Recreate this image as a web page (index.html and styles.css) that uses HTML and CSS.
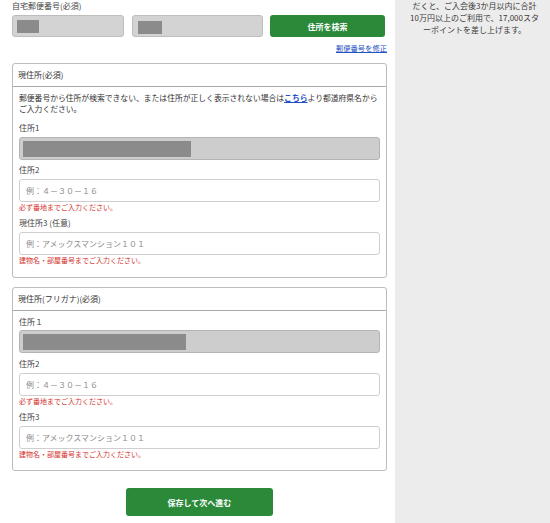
FILE: index.html
```html
<!DOCTYPE html>
<html lang="ja">
<head>
<meta charset="utf-8">
<link rel="stylesheet" href="styles.css">
</head>
<body>
<div class="page">
  <main class="main">
    <div class="top-label">自宅郵便番号(必須)</div>
    <div class="zip-row">
      <div class="zip-input zip-a"><div class="mask mask-a"></div></div>
      <div class="zip-input zip-b"><div class="mask mask-b"></div></div>
      <button class="btn search-btn">住所を検索</button>
    </div>
    <div class="fix-row"><a class="fix-link">郵便番号を修正</a></div>

    <section class="card card-1">
      <div class="card-head">現住所(必須)</div>
      <div class="card-body">
        <p class="note">郵便番号から住所が検索できない、または住所が正しく表示されない場合は<a class="here">こちら</a>より都道府県名から<br>ご入力ください。</p>
        <div class="field f-first-1">
          <div class="label">住所1</div>
          <div class="input locked"><div class="mask mask-long"></div></div>
        </div>
        <div class="field">
          <div class="label">住所2</div>
          <div class="input"><span class="ph">例：４－３０－１６</span></div>
          <div class="err">必ず番地までご入力ください。</div>
        </div>
        <div class="field">
          <div class="label">現住所3 (任意)</div>
          <div class="input"><span class="ph">例：アメックスマンション１０１</span></div>
          <div class="err">建物名・部屋番号までご入力ください。</div>
        </div>
      </div>
    </section>

    <section class="card card-2">
      <div class="card-head">現住所(フリガナ)(必須)</div>
      <div class="card-body body-2">
        <div class="field f-first-2">
          <div class="label">住所１</div>
          <div class="input locked"><div class="mask mask-long2"></div></div>
        </div>
        <div class="field">
          <div class="label">住所2</div>
          <div class="input"><span class="ph">例：４－３０－１６</span></div>
          <div class="err">必ず番地までご入力ください。</div>
        </div>
        <div class="field">
          <div class="label">住所3</div>
          <div class="input"><span class="ph">例：アメックスマンション１０１</span></div>
          <div class="err">建物名・部屋番号までご入力ください。</div>
        </div>
      </div>
    </section>

    <div class="save-row"><button class="btn save-btn">保存して次へ進む</button></div>
  </main>
  <aside class="side">
    <p class="side-text">だくと、ご入会後3か月以内に合計<br>10万円以上のご利用で、17,000スタ<br>ーポイントを差し上げます。</p>
  </aside>
</div>
</body>
</html>
```

FILE: styles.css
```css
* { box-sizing: border-box; }
html, body { margin: 0; padding: 0; background: #fff; }
body {
  font-family: "Noto Sans CJK JP", "Noto Sans", sans-serif;
  color: #333;
  font-size: 8px;
}
.page {
  display: flex;
  width: 550px;
  height: 523px;
  overflow: hidden;
}
.main {
  width: 375px;
  margin-left: 12px;
  padding-top: 1px;
}
.side {
  width: 155px;
  margin-left: 8px;
  background: #ececec;
}
.side-text {
  margin: 0;
  font-size: 8px;
  line-height: 12px;
  text-align: center;
  color: #3a3a3a;
  padding-left: 4px;
}
.top-label {
  line-height: 10px;
  height: 10px;
  color: #444;
}
.zip-row {
  display: flex;
  margin-top: 4px;
  height: 22px;
}
.zip-input {
  height: 22px;
  background: #d3d3d3;
  border: 1px solid #bdbdbd;
  border-radius: 3px;
  padding: 4px 0 0 4px;
}
.zip-a { width: 112px; }
.zip-b { width: 131px; margin-left: 8px; padding-left: 5px; padding-top: 5px; }
.mask { background: #8b8b8b; }
.mask-a { width: 22px; height: 13px; }
.mask-b { width: 24px; height: 13px; }
.btn {
  border: 0;
  border-radius: 3px;
  background: #2a8a3a;
  color: #fff;
  font-family: "Noto Sans CJK JP", "Noto Sans", sans-serif;
  font-weight: bold;
  font-size: 8px;
  padding: 0;
}
.search-btn {
  width: 115px;
  height: 22px;
  margin-left: 7px;
}
.fix-row {
  display: flex;
  justify-content: flex-end;
  margin-top: 6px;
  line-height: 10px;
  height: 10px;
}
.fix-link {
  color: #2350c4;
  text-decoration: underline;
  font-size: 7.3px;
}
.card {
  border: 1px solid #bcbcbc;
  border-radius: 3px;
}
.card-1 { margin-top: 10px; }
.card-2 { margin-top: 9px; }
.card-head {
  height: 23px;
  line-height: 22px;
  padding-left: 5px;
  border-bottom: 1px solid #a9a9a9;
  color: #333;
}
.card-body {
  padding: 5px 6px 12px 6px;
}
.body-2 { padding-top: 0; padding-bottom: 11px; }
.note {
  margin: 0;
  line-height: 11px;
  font-size: 7.8px;
  white-space: nowrap;
  color: #333;
}
.here {
  color: #2350c4;
  font-weight: bold;
  text-decoration: underline;
}
.field { margin-top: 5px; }
.field + .field { margin-top: 6px; }
.f-first-1 { margin-top: 9px; }
.f-first-1 + .field { margin-top: 5px; }
.f-first-2 { margin-top: 6px; }
.label {
  line-height: 10px;
  height: 10px;
  color: #444;
  margin-bottom: 4px;
}
.f-first-2 .label { margin-bottom: 3px; }
.input {
  height: 23px;
  border: 1px solid #cfcfcf;
  border-radius: 3px;
  background: #fff;
  display: flex;
  align-items: center;
  padding-left: 6px;
}
.input.locked {
  background: #cdcdcd;
  border-color: #b4b4b4;
  padding-left: 3px;
}
.mask-long { width: 168px; height: 16px; }
.mask-long2 { width: 163px; height: 16px; }
.ph {
  color: #8a8a8a;
  font-size: 8px;
}
.err {
  color: #d4322c;
  line-height: 10px;
  height: 10px;
  font-size: 7px;
}
.save-row {
  margin-top: 17px;
  padding-left: 114px;
}
.save-btn {
  width: 147px;
  height: 28px;
}
```
